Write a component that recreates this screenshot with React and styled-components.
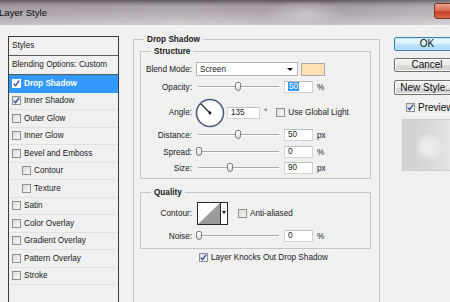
import React from 'react';
import styled, { createGlobalStyle } from 'styled-components';

const Global = createGlobalStyle`
  html, body { margin: 0; padding: 0; }
  body {
    width: 450px; height: 302px; overflow: hidden; background: #f0f0f0;
    font-family: "Liberation Sans", Arial, sans-serif; color: #1a1a1a;
  }
`;

const FS = '8.2px';

const Window = styled.div`
  width: 450px; height: 302px; display: flex; flex-direction: column;
  overflow: hidden; background: #f0f0f0;
`;

const TitleBar = styled.div`
  height: 25px; flex: none; display: flex; align-items: flex-start;
  background:
    radial-gradient(ellipse 40px 14px at 305px 14px, rgba(225,220,224,0.55), rgba(225,220,224,0) 100%),
    linear-gradient(to right, rgba(120,110,125,0.15), rgba(255,255,255,0) 40%, rgba(90,80,95,0.12) 70%, rgba(255,255,255,0.1)),
    linear-gradient(to bottom, #5d555c 0px, #8b838b 3px, #aaa2aa 6px, #b6aeb6 13px, #c6c0c5 20px, #d3cfd2 25px);
`;

const TitleText = styled.span`
  font-size: 9.6px; line-height: 26px; margin-left: -1px; color: #0b0b0b;
`;

const CloseBtn = styled.div`
  margin-left: auto; margin-top: 3px; margin-right: -20px; width: 34px; height: 14px;
  border: 1px solid #7a3528; border-radius: 3px;
  background: linear-gradient(to bottom, #eba594 0%, #d9664c 50%, #c4401f 55%, #d86a4a 100%);
`;

const Content = styled.div`
  flex: 1; min-height: 0; display: flex; align-items: stretch;
  padding: 11px 0 0 8px;
`;

const Sidebar = styled.div`
  width: 111px; flex: none; box-sizing: border-box;
  border: 1px solid #3c3c3c; border-bottom: none; background: #f0f0f0;
  display: flex; flex-direction: column;
`;

const SideHead = styled.div`
  height: 19px; box-sizing: border-box; flex: none;
  border-bottom: 1px solid #5a5a5a;
  padding-left: 3px; font-size: ${FS}; line-height: 18px; color: #1a1a1a;
`;

const SideItem = styled.div`
  height: 17.5px; box-sizing: border-box; flex: none;
  border-bottom: 1px solid ${p => p.$selected ? '#3399ff' : '#e1e1e1'};
  background: ${p => p.$selected ? '#3399ff' : 'transparent'};
  color: ${p => p.$selected ? '#ffffff' : '#1a1a1a'};
  font-weight: ${p => p.$selected ? 'bold' : 'normal'};
  display: flex; align-items: center; gap: 3px;
  padding-left: ${p => p.$sub ? 13 : 3}px;
  font-size: ${FS};
`;

const Box = styled.span`
  width: 9px; height: 9px; flex: none; box-sizing: border-box;
  border: 1px solid ${p => p.$light ? '#ffffff' : '#8e8f8f'};
  background: ${p => p.$light ? '#ffffff' : 'linear-gradient(135deg, #dcdcdc, #f7f7f7)'};
  display: inline-flex; align-items: center; justify-content: center;
`;

function Check({ checked, light }) {
  return (
    <Box $light={light}>
      {checked && (
        <svg width="7" height="7" viewBox="0 0 7 7">
          <path d="M0.8 3.6 L2.6 5.6 L6.2 0.6" fill="none" stroke="#2c4c9c" strokeWidth="1.3" />
        </svg>
      )}
    </Box>
  );
}

const Main = styled.fieldset`
  margin: -1px 0 0 14px; padding: 0 8px 0 6px; width: 247px; flex: none;
  box-sizing: border-box; min-width: 0;
  border: 1px solid #c6c6c6; border-bottom: none;
  display: flex; flex-direction: column;
`;

const Group = styled.fieldset`
  margin: ${p => p.$mt}px 0 0 0; padding: 0 0 ${p => p.$pb}px 0; min-width: 0;
  border: 1px solid #c6c6c6;
`;

const Legend = styled.legend`
  font-weight: bold; font-size: ${FS}; line-height: 9px; padding: 0 3px;
  margin-left: ${p => p.$ml}px; color: #1a1a1a;
`;

const Row = styled.div`
  display: flex; align-items: center; height: ${p => p.$h}px; margin-top: ${p => p.$mt}px;
  font-size: ${FS};
`;

const Label = styled.span`
  width: 51px; text-align: right; margin-right: 4px; flex: none; color: #1a1a1a;
`;

const Select = styled.div`
  width: 102px; height: 14px; box-sizing: border-box; background: #fff;
  border: 1px solid #b4b4b4; display: flex; align-items: center; padding-left: 3px;
  font-size: ${FS};
`;

const Arrow = styled.span`
  margin-left: auto; margin-right: 4px; width: 0; height: 0;
  border-left: 3px solid transparent; border-right: 3px solid transparent; border-top: 3px solid #111;
`;

const Swatch = styled.div`
  width: 24px; height: 13px; margin-left: 3px; box-sizing: border-box;
  background: #fee0b3; border: 1px solid #a9a9a9;
`;

const SliderWrap = styled.div`
  width: 84px; height: 12px; position: relative; flex: none;
`;

const Track = styled.div`
  position: absolute; left: 2px; right: 1px; top: 5px; height: 1px;
  background: #a9a9a9; box-shadow: 0 1px 0 #ffffff;
`;

const Thumb = styled.div`
  position: absolute; top: 1px; width: 6px; height: 9px; box-sizing: border-box;
  border: 1px solid #7d7d7d; border-radius: 2px 2px 3px 3px;
  background: linear-gradient(to bottom, #ffffff, #dcdcdc);
`;

function Slider({ at }) {
  return (
    <SliderWrap>
      <Track />
      <Thumb style={{ left: at }} />
    </SliderWrap>
  );
}

const Input = styled.div`
  width: ${p => p.$w || 29}px; height: 12px; box-sizing: border-box; margin-left: ${p => p.$ml ?? 4}px;
  background: #fff; border: 1px solid #d2d2d2; border-top-color: #bdbdbd;
  font-size: ${FS}; line-height: 10px; padding-left: 3px; flex: none;
`;

const Sel = styled.span`
  background: #3399ff; color: #fff; padding: 0 1px;
`;

const Unit = styled.span`
  margin-left: 4px; font-size: ${FS}; color: #1a1a1a;
`;

const Dial = styled.svg`
  flex: none; margin-left: -1px;
`;

const CheckLabel = styled.label`
  display: flex; align-items: center; gap: 3px; margin-left: ${p => p.$ml}px;
  font-size: ${FS}; color: #1a1a1a;
`;

const Contour = styled.div`
  width: 31px; height: 23px; box-sizing: border-box; border: 1px solid #2a2a2a;
  display: flex; background: #fff; margin-left: 1px;
`;

const ContourPic = styled.svg`
  flex: none; display: block;
`;

const ContourDrop = styled.div`
  flex: 1; border-left: 1px solid #2a2a2a; display: flex; justify-content: center; padding-top: 8px;
  box-sizing: border-box;
`;

const SmallArrow = styled.span`
  width: 0; height: 0; border-left: 2px solid transparent; border-right: 2px solid transparent;
  border-top: 3px solid #111;
`;

const KnockRow = styled.div`
  display: flex; align-items: center; margin-top: 4px; padding-left: 59px;
`;

const Right = styled.div`
  margin-left: 14px; width: 66px; flex: none; display: flex; flex-direction: column;
`;

const Button = styled.div`
  height: ${p => p.$h || 14}px; margin-top: ${p => p.$mt}px; box-sizing: border-box;
  border: 1px solid ${p => p.$focus ? '#3c7fb1' : '#707070'}; border-radius: 2px;
  background: ${p => p.$focus
    ? 'linear-gradient(to bottom, #eaf6fd 0%, #d9f0fc 50%, #bee6fd 51%, #a7d9f5 100%)'
    : 'linear-gradient(to bottom, #f2f2f2 0%, #ebebeb 50%, #dddddd 51%, #cfcfcf 100%)'};
  box-shadow: ${p => p.$focus ? 'inset 0 0 0 1px #bfe6fb' : 'inset 0 0 0 1px #fbfbfb'};
  font-size: 10px; line-height: ${p => (p.$h || 14) - 2}px; text-align: center; white-space: nowrap;
  color: #111;
`;

const PreviewCheck = styled.label`
  display: flex; align-items: center; gap: 3px; margin: 7px 0 0 12px; font-size: 10px; color: #111;
`;

const PreviewBox = styled.div`
  margin: 6px 0 0 8px; height: 52px; box-sizing: border-box;
  border: 1px solid #cfcfcf;
  background:
    radial-gradient(ellipse 14px 14px at 26px 27px, #ececec 0%, #e8e8e8 60%, rgba(230,230,230,0) 100%),
    linear-gradient(to right, #d3d3d3 0%, #d6d6d6 40%, #e2e2e2 75%, #eaeaea 100%);
`;

const sideItems = [
  { t: 'Drop Shadow', c: true, sel: true },
  { t: 'Inner Shadow', c: true },
  { t: 'Outer Glow' },
  { t: 'Inner Glow' },
  { t: 'Bevel and Emboss' },
  { t: 'Contour', sub: true },
  { t: 'Texture', sub: true },
  { t: 'Satin' },
  { t: 'Color Overlay' },
  { t: 'Gradient Overlay' },
  { t: 'Pattern Overlay' },
  { t: 'Stroke' },
];

export default function App() {
  return (
    <Window>
      <Global />
      <TitleBar>
        <TitleText>Layer Style</TitleText>
        <CloseBtn />
      </TitleBar>
      <Content>
        <Sidebar>
          <SideHead>Styles</SideHead>
          <SideHead>Blending Options: Custom</SideHead>
          {sideItems.map(it => (
            <SideItem key={it.t} $selected={it.sel} $sub={it.sub}>
              <Check checked={it.c} light={it.sel} />
              <span>{it.t}</span>
            </SideItem>
          ))}
        </Sidebar>

        <Main>
          <Legend $ml={4}>Drop Shadow</Legend>
          <Group $mt={3} $pb={4}>
            <Legend $ml={10}>Structure</Legend>
            <Row $h={14} $mt={6}>
              <Label>Blend Mode:</Label>
              <Select>Screen<Arrow /></Select>
              <Swatch />
            </Row>
            <Row $h={12} $mt={5}>
              <Label>Opacity:</Label>
              <Slider at={39} />
              <Input><Sel>50</Sel></Input>
              <Unit>%</Unit>
            </Row>
            <Row $h={29} $mt={5}>
              <Label>Angle:</Label>
              <Dial width="30" height="30" viewBox="0 0 30 30">
                <circle cx="15" cy="15" r="13.5" fill="#ffffff" stroke="#4e5a7c" strokeWidth="1.6" />
                <line x1="15" y1="15" x2="6" y2="6" stroke="#1e1e1e" strokeWidth="1.1" />
                <circle cx="15" cy="15" r="1.4" fill="#111" />
              </Dial>
              <Input $w={33} $ml={2}>135</Input>
              <Unit>°</Unit>
              <CheckLabel $ml={9}><Check /><span>Use Global Light</span></CheckLabel>
            </Row>
            <Row $h={12} $mt={2}>
              <Label>Distance:</Label>
              <Slider at={39} />
              <Input>50</Input>
              <Unit>px</Unit>
            </Row>
            <Row $h={12} $mt={5}>
              <Label>Spread:</Label>
              <Slider at={0} />
              <Input>0</Input>
              <Unit>%</Unit>
            </Row>
            <Row $h={12} $mt={4}>
              <Label>Size:</Label>
              <Slider at={31} />
              <Input>90</Input>
              <Unit>px</Unit>
            </Row>
          </Group>

          <Group $mt={9} $pb={6}>
            <Legend $ml={10}>Quality</Legend>
            <Row $h={23} $mt={5}>
              <Label>Contour:</Label>
              <Contour>
                <ContourPic width="22" height="21" viewBox="0 0 22 21">
                  <polygon points="22,0 22,21 0,21" fill="#9c9c9c" />
                </ContourPic>
                <ContourDrop><SmallArrow /></ContourDrop>
              </Contour>
              <CheckLabel $ml={10}><Check /><span>Anti-aliased</span></CheckLabel>
            </Row>
            <Row $h={12} $mt={5}>
              <Label>Noise:</Label>
              <Slider at={0} />
              <Input>0</Input>
              <Unit>%</Unit>
            </Row>
          </Group>

          <KnockRow>
            <CheckLabel $ml={0}><Check checked /><span>Layer Knocks Out Drop Shadow</span></CheckLabel>
          </KnockRow>
        </Main>

        <Right>
          <Button $focus $mt={1}>OK</Button>
          <Button $mt={7}>Cancel</Button>
          <Button $mt={8} $h={15}>New Style...</Button>
          <PreviewCheck><Check checked /><span>Preview</span></PreviewCheck>
          <PreviewBox />
        </Right>
      </Content>
    </Window>
  );
}
